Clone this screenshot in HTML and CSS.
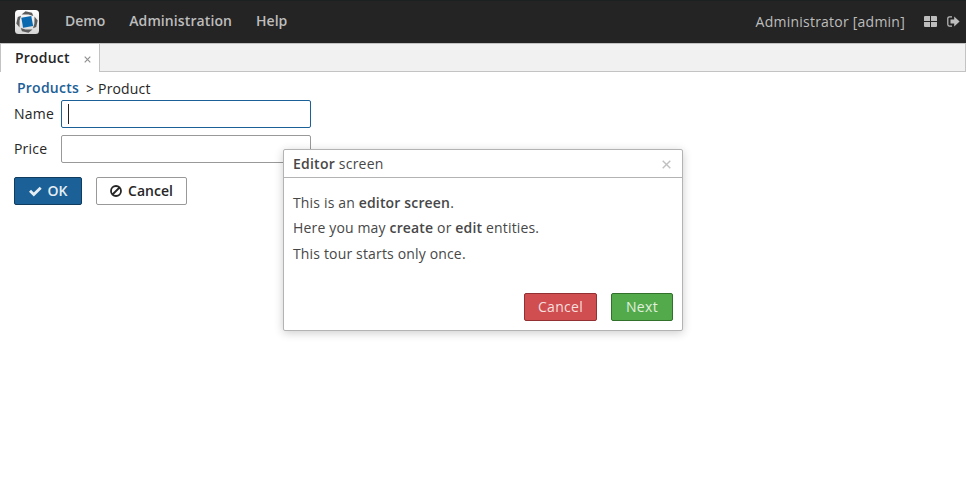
FILE: index.html
```html
<!DOCTYPE html>
<html lang="en">
<head>
<meta charset="utf-8">
<title>Product</title>
<link rel="stylesheet" href="styles.css">
</head>
<body>
<header class="topbar">
  <svg class="logo" viewBox="0 0 24 24" aria-hidden="true">
    <defs><linearGradient id="tile" x2="0" y2="1"><stop stop-color="#fff"/><stop offset="1" stop-color="#d5d5d5"/></linearGradient></defs>
    <rect width="24" height="24" rx="3.5" fill="url(#tile)"/>
    <g fill="#5c5c5c">
      <path d="M6.5 4.5L10.5 1.3L17 2.8L18.3 6L13.5 4.6Z"/>
      <path d="M19.5 6.5L22.7 10.5L21.2 17L18 18.3L19.4 13.5Z"/>
      <path d="M17.5 19.5L13.5 22.7L7 21.2L5.7 18L10.5 19.4Z"/>
      <path d="M4.5 17.5L1.3 13.5L2.8 7L6 5.7L4.6 10.5Z"/>
    </g>
    <path d="M6.3 7.8L16.3 6L18.1 16L8.1 17.8Z" fill="#0b69b0"/>
  </svg>
  <nav class="menu"><span>Demo</span><span class="wide">Administration</span><span>Help</span></nav>
  <span class="user">Administrator [admin]</span>
  <svg class="grid-icon" viewBox="0 0 13 11" aria-hidden="true"><path fill="currentColor" d="M.7 0H6V5H0V.7ZM7 0H12.3L13 .7V5H7ZM0 6H6V11H.7L0 10.3ZM7 6H13V10.3L12.3 11H7Z"/></svg>
  <svg class="exit-icon" viewBox="0 0 13 11" aria-hidden="true"><path fill="none" stroke="currentColor" stroke-width="1.2" d="M5 .8H2.5Q.8 .8 .8 2.5V8.5Q.8 10.2 2.5 10.2H5"/><path fill="currentColor" d="M3.5 3.5H7.2V.6L12.6 5.5L7.2 10.4V7.5H3.5Z"/></svg>
</header>
<div class="tabs">
  <div class="tab"><span>Product</span><svg class="tab-close" viewBox="0 0 7 7" aria-hidden="true"><path d="M.7 .7L6.3 6.3M6.3 .7L.7 6.3"/></svg></div>
  <div class="tab-rest"></div>
</div>
<main>
  <div class="crumbs"><a>Products</a><span>&gt;</span><span>Product</span></div>
  <div class="form">
    <label>Name</label><div class="field focused"><i class="caret"></i></div>
    <label>Price</label><div class="field"></div>
  </div>
  <div class="actions">
    <div class="btn primary"><svg viewBox="0 0 13 11" aria-hidden="true"><path fill="currentColor" d="M0 5.8L2 3.8L4.8 6.6L10.7 .7L12.7 2.7L4.8 10.6Z"/></svg>OK</div>
    <div class="btn plain"><svg viewBox="0 0 12 12" aria-hidden="true"><path fill="none" stroke="currentColor" stroke-width="1.8" d="M6 1A5 5 0 1 0 6 11A5 5 0 1 0 6 1M2.5 9.5L9.5 2.5"/></svg>Cancel</div>
  </div>
</main>
<section class="popup">
  <div class="popup-head"><span><b>Editor</b> screen</span><svg viewBox="0 0 9 9" aria-hidden="true"><path d="M.7 .7L8.3 8.3M8.3 .7L.7 8.3"/></svg></div>
  <div class="popup-body">
    <p>This is an <b>editor screen</b>.</p>
    <p>Here you may <b>create</b> or <b>edit</b> entities.</p>
    <p>This tour starts only once.</p>
  </div>
  <div class="popup-foot"><div class="btn danger">Cancel</div><div class="btn success">Next</div></div>
</section>
</body>
</html>
```

FILE: styles.css
```css
* { box-sizing: border-box; }
body { margin: 0; height: 478px; overflow: hidden; background: #fff; color: #262626; font: 14px/20px "Open Sans", sans-serif; }
b { font-weight: 600; }
svg { display: block; flex: none; }
.topbar { display: flex; align-items: center; height: 43px; padding: 0 6px 0 15px; background: #242424; border-top: 1px solid #1b2021; color: #bdbdbd; }
.logo { width: 24px; height: 24px; }
.menu { display: flex; gap: 24px; margin: 0 0 2px 26px; font-weight: 600; }
.wide { letter-spacing: .1px; }
.user { margin-left: auto; letter-spacing: .23px; }
.grid-icon { width: 13px; height: 11px; margin: 0 0 1px 19px; }
.exit-icon { width: 13px; height: 11px; margin: 0 0 1px 10px; }
.tabs { display: flex; height: 29px; }
.tab { display: flex; align-items: center; width: 100px; padding-left: 14px; border: 1px solid #c3c3c3; border-bottom: 0; font-weight: 600; letter-spacing: .2px; }
.tab-close { width: 7px; height: 7px; margin: 3px 0 0 14px; }
.tab-close path { stroke: #919191; stroke-width: 1.2; }
.tab-rest { flex: 1; background: #f1f1f1; border: solid #c3c3c3; border-width: 1px 1px 1px 0; }
main { padding: 6px 14px 0; }
.crumbs { display: flex; height: 22px; padding-left: 3px; line-height: 22px; letter-spacing: .15px; }
.crumbs a { margin: -1px 7px 0 0; color: #1b6097; font-weight: 600; letter-spacing: .23px; }
.crumbs span + span { margin-left: 4px; }
.form { display: grid; grid-template-columns: 47px 250px; row-gap: 7px; align-items: center; letter-spacing: .2px; }
.field { height: 28px; padding: 3px 6px; border: 1px solid #999; border-radius: 2px; }
.focused { border-color: #1b6097; }
.caret { display: block; width: 1px; height: 20px; background: #222; }
.actions { display: flex; gap: 14px; margin-top: 14px; }
.btn { display: flex; align-items: center; justify-content: center; height: 28px; border: 1px solid; border-radius: 2px; }
.primary { width: 68px; gap: 6px; background: #1b6097; border-color: #103c60; color: #e6eef4; font-weight: 600; }
.primary svg { width: 13px; height: 11px; }
.plain { width: 91px; gap: 6px; border-color: #999; color: #262626; font-weight: 600; }
.plain svg { width: 12px; height: 12px; }
.popup { position: absolute; left: 283px; top: 149px; width: 400px; height: 182px; background: #fff; border: 1px solid #b3b3b3; border-radius: 2px; box-shadow: 0 2px 10px rgba(0,0,0,.2); color: #474747; letter-spacing: .16px; }
.popup-head { display: flex; align-items: center; justify-content: space-between; height: 28px; padding: 0 11px 0 9px; border-bottom: 1px solid #b3b3b3; letter-spacing: .23px; }
.popup-head svg { width: 9px; height: 9px; margin-top: 1px; }
.popup-head path { stroke: #c0c0c0; stroke-width: 1.4; }
.popup-body { height: 115px; padding: 12px 9px 0; line-height: 25.4px; }
.popup-body p { margin: 0; }
.popup-foot { display: flex; justify-content: flex-end; gap: 14px; padding-right: 9px; }
.danger { width: 73px; background: #d04e50; border-color: #923033; color: #f5dfdf; letter-spacing: .3px; }
.success { width: 62px; background: #53aa4b; border-color: #31712c; color: #e0f0df; letter-spacing: .3px; }
```
